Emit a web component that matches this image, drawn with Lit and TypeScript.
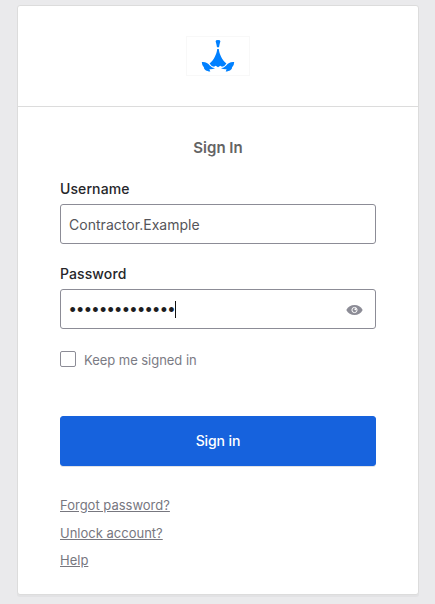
import { LitElement, html, css } from "lit";
import { customElement, state } from "lit/decorators.js";

@customElement("app-root")
export class AppRoot extends LitElement {
  @state() private username = "Contractor.Example";
  @state() private passwordLength = 14;

  static styles = css`
    :host { display: block; box-sizing: border-box; height: 604px; padding: 5px 16px 0 17px; overflow: hidden; background: #eaeaec; font-family: Inter, "Liberation Sans", sans-serif; color: #1d1d21; }
    * { box-sizing: border-box; }
    .card { width: 402px; height: 590px; background: #fff; border: 1px solid #dcdcdc; border-radius: 3px; box-shadow: 0 2px 0 rgba(175, 175, 175, 0.12); }
    header { height: 101px; display: flex; justify-content: center; align-items: flex-start; padding-top: 30px; border-bottom: 1px solid #dcdcdc; }
    .logo { display: block; width: 64px; height: 40px; }
    main { padding: 31px 42px 0; display: flex; flex-direction: column; }
    h2 { margin: 0; height: 20px; line-height: 20px; font-size: 15px; font-weight: 600; text-align: center; color: #646464; }
    .label { height: 20px; line-height: 20px; font-size: 14px; font-weight: 500; letter-spacing: 0.1px; margin-top: 21px; color: #26262a; }
    .label.second { margin-top: 20px; }
    .field { height: 40px; margin-top: 5px; padding: 0 8px; display: flex; align-items: center; border: 1px solid #8c8c96; border-radius: 3px; background: #fff; }
    .value { padding-top: 2px; font-size: 14px; line-height: 20px; letter-spacing: 0.03px; color: #55555a; }
    .dots { width: 106px; padding: 2px 0 0 0.5px; font: 18px/20px "Liberation Sans", sans-serif; letter-spacing: 1.3px; white-space: nowrap; color: #1d1d21; }
    .caret { width: 1px; height: 17px; background: #111; }
    .eye { width: 17px; height: 12px; margin-top: 1px; margin-left: auto; margin-right: 4px; }
    .remember { margin-top: 20px; height: 20px; display: flex; align-items: center; font-size: 13px; letter-spacing: -0.04px; color: #7b7b84; }
    .remember-text { padding-top: 2px; }
    .box { width: 16px; height: 16px; margin-right: 8px; border: 1px solid #8c8c96; border-radius: 2px; }
    button { height: 50px; margin: 47px 0 0; padding: 0 0 2px; border: 1px solid #1662dd; border-radius: 3px; background: #1662dd; color: #fff; font: 500 14px Inter, "Liberation Sans", sans-serif; letter-spacing: -0.1px; box-shadow: 0 1px 0 #e0e2e6; }
    nav { margin-top: 29px; display: flex; flex-direction: column; align-items: flex-start; gap: 7.7px; }
    a { height: 20px; font-size: 13px; line-height: 20px; color: #77777f; text-decoration: underline; }
  `;

  render() {
    return html`
      <div class="card">
        <header>
          <svg class="logo" viewBox="0 0 64 40">
            <rect x=".5" y=".5" width="63" height="39" fill="none" stroke="#f8f8f8" />
            <g fill="#0080ff">
              <path d="M29.6 5.2Q29.6 4 32 4T34.4 5.2Q33.4 8.5 33 11.2H31Q30.6 8.5 29.6 5.2Z" />
              <path d="M31.2 13H32.8C33.3 18 36 24 40.4 27.4Q39 30 36 30.8L34.3 29.8L32 31.2L29.7 29.8L28 30.8Q25 30 23.6 27.4C28 24 30.7 18 31.2 13Z" />
              <path d="M15.8 26C19.5 25.6 21.8 27 23.8 29.4Q26 31.8 29 32.3Q26 33.6 23.4 33.2L24.3 35.6C20.5 35.5 17.8 33.5 18 31.6Q15.8 29.5 15.8 26Z" />
              <path d="M48.2 26C44.5 25.6 42.2 27 40.2 29.4Q38 31.8 35 32.3Q38 33.6 40.6 33.2L39.7 35.6C43.5 35.5 46.2 33.5 46 31.6Q48.2 29.5 48.2 26Z" />
            </g>
          </svg>
        </header>
        <main>
          <h2>Sign In</h2>
          <div class="label">Username</div>
          <div class="field"><span class="value">${this.username}</span></div>
          <div class="label second">Password</div>
          <div class="field">
            <span class="dots">${"•".repeat(this.passwordLength)}</span>
            <span class="caret"></span>
            <svg class="eye" viewBox="0 0 17 12">
              <path d="M.3 6C2 2.7 5 1 8.5 1S15 2.7 16.7 6C15 9.3 12 11 8.5 11S2 9.3.3 6Z" fill="#8c8c96" />
              <circle cx="8.5" cy="6" r="2.6" fill="#8c8c96" stroke="#fff" stroke-width="1" />
              <circle cx="9.4" cy="5.2" r="1" fill="#fff" />
            </svg>
          </div>
          <div class="remember"><span class="box"></span><span class="remember-text">Keep me signed in</span></div>
          <button type="button">Sign in</button>
          <nav><a>Forgot password?</a><a>Unlock account?</a><a>Help</a></nav>
        </main>
      </div>
    `;
  }
}
